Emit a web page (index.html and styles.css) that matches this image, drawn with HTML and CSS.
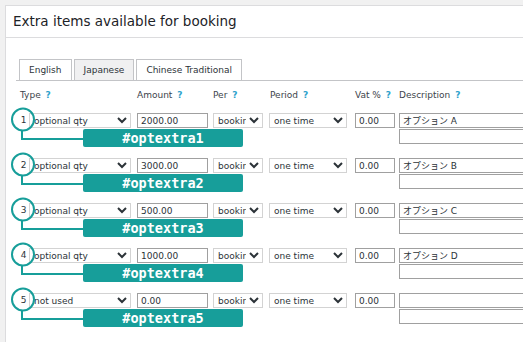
FILE: index.html
```html
<!DOCTYPE html>
<html lang="en">
<head>
    <meta charset="UTF-8">
    <meta name="viewport" content="width=device-width, initial-scale=1.0">
    <title>Extra items</title>
    <link rel="stylesheet" href="styles.css">
</head>
<body>
    <div class="postbox">
        <h2 class="postbox-title">Extra items available for booking</h2>
        <div class="inside">
            <div class="nav-tabs">
                <a class="nav-tab">English</a>
                <a class="nav-tab active">Japanese</a>
                <a class="nav-tab">Chinese Traditional</a>
            </div>

            <div class="extras">
                <div class="extras-row extras-head">
                    <div class="head-type">Type <span class="help">?</span></div>
                    <div>Amount <span class="help">?</span></div>
                    <div>Per <span class="help">?</span></div>
                    <div class="head-period">Period <span class="help">?</span></div>
                    <div>Vat % <span class="help">?</span></div>
                    <div>Description <span class="help">?</span></div>
                </div>

                <div class="extras-row">
                    <div class="cell-type"><select class="ctl sel-type"><option>optional qty</option></select></div>
                    <div><input class="ctl inp-amount" value="2000.00"></div>
                    <div><select class="ctl sel-per"><option>booking</option></select></div>
                    <div><select class="ctl sel-period"><option>one time</option></select></div>
                    <div><input class="ctl inp-vat" value="0.00"></div>
                    <div class="cell-desc"><input class="ctl inp-desc" value="オプション A"><input class="ctl inp-desc"></div>
                    <div class="callout">
                        <svg width="75" height="36"><circle cx="13" cy="13.5" r="11"/><path d="M12 25 V33 H75"/></svg>
                        <span class="callout-num">1</span>
                    </div>
                    <div class="callout-label">#optextra1</div>
                </div>

                <div class="extras-row">
                    <div class="cell-type"><select class="ctl sel-type"><option>optional qty</option></select></div>
                    <div><input class="ctl inp-amount" value="3000.00"></div>
                    <div><select class="ctl sel-per"><option>booking</option></select></div>
                    <div><select class="ctl sel-period"><option>one time</option></select></div>
                    <div><input class="ctl inp-vat" value="0.00"></div>
                    <div class="cell-desc"><input class="ctl inp-desc" value="オプション B"><input class="ctl inp-desc"></div>
                    <div class="callout">
                        <svg width="75" height="36"><circle cx="13" cy="13.5" r="11"/><path d="M12 25 V33 H75"/></svg>
                        <span class="callout-num">2</span>
                    </div>
                    <div class="callout-label">#optextra2</div>
                </div>

                <div class="extras-row">
                    <div class="cell-type"><select class="ctl sel-type"><option>optional qty</option></select></div>
                    <div><input class="ctl inp-amount" value="500.00"></div>
                    <div><select class="ctl sel-per"><option>booking</option></select></div>
                    <div><select class="ctl sel-period"><option>one time</option></select></div>
                    <div><input class="ctl inp-vat" value="0.00"></div>
                    <div class="cell-desc"><input class="ctl inp-desc" value="オプション C"><input class="ctl inp-desc"></div>
                    <div class="callout">
                        <svg width="75" height="36"><circle cx="13" cy="13.5" r="11"/><path d="M12 25 V33 H75"/></svg>
                        <span class="callout-num">3</span>
                    </div>
                    <div class="callout-label">#optextra3</div>
                </div>

                <div class="extras-row">
                    <div class="cell-type"><select class="ctl sel-type"><option>optional qty</option></select></div>
                    <div><input class="ctl inp-amount" value="1000.00"></div>
                    <div><select class="ctl sel-per"><option>booking</option></select></div>
                    <div><select class="ctl sel-period"><option>one time</option></select></div>
                    <div><input class="ctl inp-vat" value="0.00"></div>
                    <div class="cell-desc"><input class="ctl inp-desc" value="オプション D"><input class="ctl inp-desc"></div>
                    <div class="callout">
                        <svg width="75" height="36"><circle cx="13" cy="13.5" r="11"/><path d="M12 25 V33 H75"/></svg>
                        <span class="callout-num">4</span>
                    </div>
                    <div class="callout-label">#optextra4</div>
                </div>

                <div class="extras-row">
                    <div class="cell-type"><select class="ctl sel-type"><option>not used</option></select></div>
                    <div><input class="ctl inp-amount" value="0.00"></div>
                    <div><select class="ctl sel-per"><option>booking</option></select></div>
                    <div><select class="ctl sel-period"><option>one time</option></select></div>
                    <div><input class="ctl inp-vat" value="0.00"></div>
                    <div class="cell-desc"><input class="ctl inp-desc"><input class="ctl inp-desc"></div>
                    <div class="callout">
                        <svg width="75" height="36"><circle cx="13" cy="13.5" r="11"/><path d="M12 25 V33 H75"/></svg>
                        <span class="callout-num">5</span>
                    </div>
                    <div class="callout-label">#optextra5</div>
                </div>
            </div>
        </div>
    </div>
</body>
</html>
```

FILE: styles.css
```css
* {
    box-sizing: border-box;
    margin: 0;
    padding: 0;
}

html, body {
    height: 100%;
}

body {
    font-family: 'DejaVu Sans', Verdana, 'Noto Sans CJK JP', sans-serif;
    font-size: 9px;
    color: #3c434a;
    background-color: #f1f1f1;
    padding: 5px 0 0 5px;
    overflow: hidden;
}

.postbox {
    height: 100%;
    background: white;
    border: 1px solid #dcdcde;
    border-right: none;
    border-bottom: none;
    overflow: hidden;
}

.postbox-title {
    height: 32px;
    padding-left: 7px;
    border-bottom: 1px solid #dcdcde;
    font-size: 13.5px;
    font-weight: normal;
    line-height: 31px;
    color: #1d2327;
}

.inside {
    padding: 21px 0 0 10px;
}

.nav-tabs {
    display: flex;
    gap: 2px;
    padding-left: 3px;
    border-bottom: 1px solid #c3c4c7;
}

.nav-tab {
    height: 21px;
    padding: 0 9px;
    border: 1px solid #c3c4c7;
    border-bottom: none;
    line-height: 20px;
    color: #2c3338;
    background: white;
}

.nav-tab.active {
    background: #f0f0f1;
}

.extras-row {
    position: relative;
    display: grid;
    grid-template-columns: 121px 76px 56px 86px 44px 160px;
    height: 45px;
    align-items: start;
}

.extras-head {
    height: 32px;
    padding-top: 8px;
    line-height: 12px;
    color: #3c434a;
}

.head-type {
    padding-left: 4px;
}

.head-period {
    padding-left: 1px;
}

.help {
    margin-left: 2px;
    color: #2ea2cc;
    font-weight: bold;
}

.ctl {
    display: block;
    height: 15px;
    font-family: inherit;
    font-size: 9px;
    color: #2c3338;
    background: white;
    border-radius: 0;
}

select.ctl {
    border: 1px solid #d3d3d3;
    padding: 0;
}

input.ctl {
    border: 1px solid #a0a0a0;
    padding: 0 3px;
    font-family: 'DejaVu Sans', 'Noto Sans CJK JP', sans-serif;
}

.cell-type {
    padding-left: 13px;
}

.sel-type { width: 102px; }
.inp-amount { width: 71px; }
.sel-per { width: 50px; }
.sel-period { width: 78px; }
.inp-vat { width: 40px; }
.inp-desc { width: 160px; }

.cell-desc {
    display: flex;
    flex-direction: column;
    gap: 1px;
}

.callout {
    position: absolute;
    left: -6px;
    top: -7px;
    width: 75px;
    height: 36px;
}

.callout svg {
    display: block;
    fill: none;
    stroke: #179e9a;
    stroke-width: 2;
}

.callout-num {
    position: absolute;
    left: 9px;
    top: 8px;
    width: 9px;
    line-height: 12px;
    text-align: center;
    color: #2c3338;
}

.callout-label {
    position: absolute;
    left: 67px;
    top: 16px;
    width: 160px;
    height: 18px;
    border-radius: 2px;
    background: #179e9a;
    color: white;
    font-family: 'DejaVu Sans Mono', monospace;
    font-size: 13.5px;
    font-weight: bold;
    line-height: 18px;
    text-align: center;
}
```
